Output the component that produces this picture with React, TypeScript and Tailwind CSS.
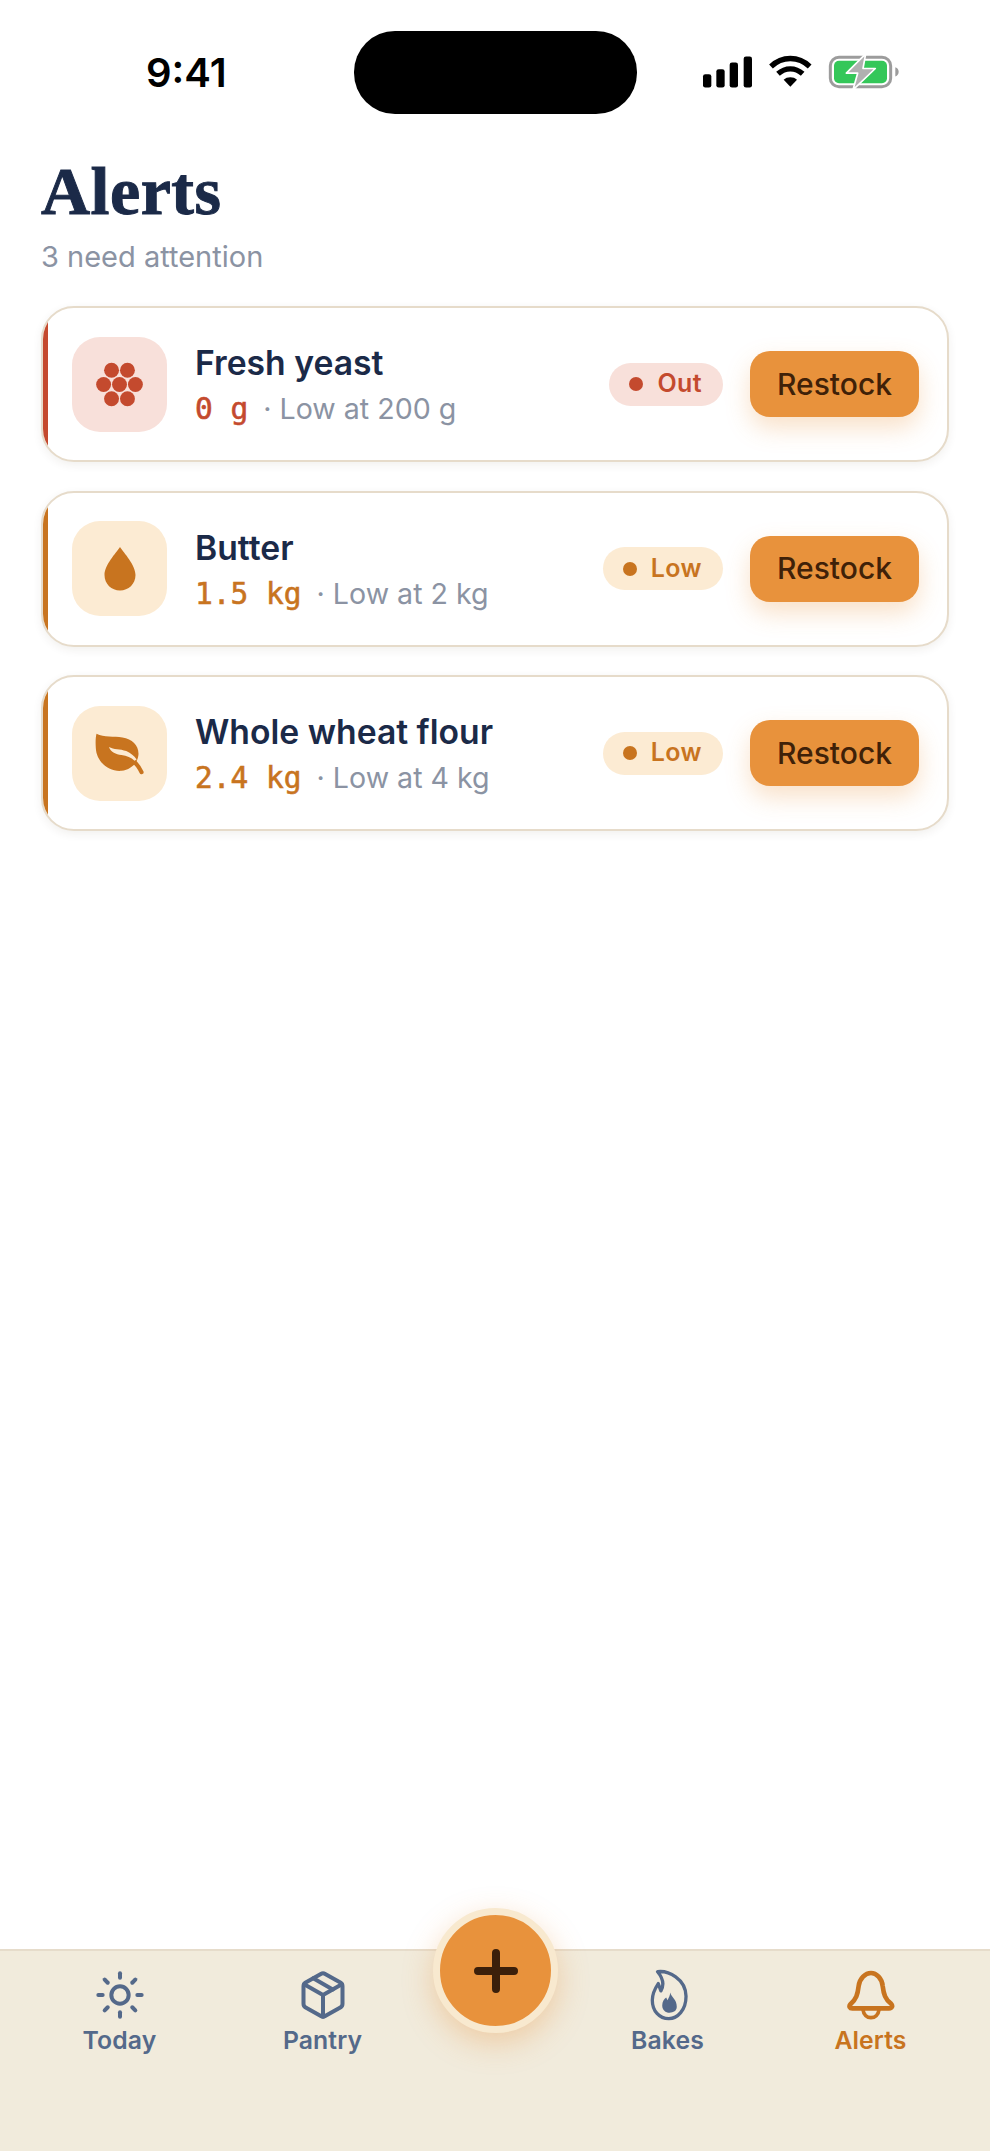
import React from "react";
import { Sun, Package } from "lucide-react";

const inter = "font-['Inter',sans-serif]";

function YeastIcon() {
  const pts = [[242,226],[290,226],[218,269],[266,269],[314,269],[242,312],[290,312]];
  return (
    <svg viewBox="180 190 172 158" className="w-[57px] h-[53px]">
      {pts.map(([x, y]) => <circle key={`${x}-${y}`} cx={x} cy={y} r="22.5" fill="#c44a2e" />)}
    </svg>
  );
}

function DropIcon() {
  return (
    <svg viewBox="0 0 36 48" className="w-[36px] h-[48px]">
      <path d="M18 2 C22 8 33.5 20 33.5 30 C33.5 39 26.5 45.5 18 45.5 C9.5 45.5 2.5 39 2.5 30 C2.5 20 14 8 18 2 Z" fill="#c8741f" />
    </svg>
  );
}

function LeafIcon() {
  return (
    <svg viewBox="40 36 150 130" className="w-[52px] h-[45px] -translate-x-[1px]">
      <path d="M50 44 C72 56 100 50 125 55 C155 60 174 80 171 106 C169 128 150 148 122 151 C85 154 50 125 48 85 C47 70 47 55 50 44 Z" fill="#c8741f" />
      <path d="M155 122 C166 130 174 142 180 155" fill="none" stroke="#c8741f" strokeWidth="12" strokeLinecap="round" />
      <path d="M86 82 C100 90 118 87 136 94 C150 100 158 108 166 118 L160 122 C150 112 138 107 122 105 C106 103 92 98 86 82 Z" fill="#fcebd3" />
    </svg>
  );
}

function FlameIcon() {
  return (
    <svg viewBox="54 26 124 160" className="w-[41px] h-[53px] translate-x-[2px]">
      <path d="M80 34 C112 30 165 55 166 108 C166 150 140 176 114 176 C85 176 64 152 64 120 C64 100 72 85 82 70 L90 92 C98 78 100 58 80 34 Z" fill="none" stroke="#54698a" strokeWidth="10" strokeLinejoin="round" />
      <path d="M118 97 C122 112 138 118 138 140 C138 152 128 158 116 158 C104 158 94 150 94 136 C94 124 100 116 106 112 L110 120 C114 112 118 106 118 97 Z" fill="#54698a" />
    </svg>
  );
}

function BellIcon() {
  return (
    <svg viewBox="50 24 144 156" className="w-[48px] h-[52px]">
      <path d="M122 36 C105 36 88 52 85 75 C82 100 78 115 60 130 C55 136 58 142 66 142 L176 142 C186 142 188 134 182 128 C165 115 160 100 157 75 C155 52 138 36 122 36 Z" fill="none" stroke="#c8741f" strokeWidth="14" strokeLinejoin="round" />
      <path d="M98 146 C100 162 110 170 122 170 C134 170 144 162 146 146" fill="none" stroke="#c8741f" strokeWidth="11" />
    </svg>
  );
}

function StatusIcons() {
  return (
    <svg viewBox="68 48 588 104" className="w-[196px] h-[35px] overflow-visible">
      <rect x="68" y="105" width="25" height="40" rx="7" fill="#000" />
      <rect x="108" y="90" width="25" height="55" rx="7" fill="#000" />
      <rect x="148" y="70" width="25" height="75" rx="7" fill="#000" />
      <rect x="190" y="52" width="25" height="93" rx="7" fill="#000" />
      <path d="M272 82 C305 50 355 50 388 82" fill="none" stroke="#000" strokeWidth="16" />
      <path d="M293 104 C315 84 345 84 367 104" fill="none" stroke="#000" strokeWidth="16" />
      <path d="M310 122 C320 112 340 112 350 122 L330 143 Z" fill="#000" />
      <rect x="450" y="54" width="181" height="89" rx="26" fill="none" stroke="#9c9c9c" strokeWidth="9" />
      <rect x="461" y="65" width="159" height="67" rx="15" fill="#34c759" />
      <path d="M645 84 C652 86 655 92 655 98 C655 104 652 110 645 112 Z" fill="#9c9c9c" />
      <path d="M556 44 L498 102 L532 102 L518 152 L585 88 L548 88 Z" fill="#b0b0b0" stroke="#fff" strokeWidth="5" strokeLinejoin="round" />
    </svg>
  );
}

type Row = {
  name: string;
  qty: string;
  low: string;
  status: string;
  icon: React.ReactNode;
};

function AlertCard({ name, qty, low, status, icon, out }: Row & { out: boolean }) {
  return (
    <div className="relative h-[156px] rounded-[33px] border-2 border-[#e6dbca] bg-white overflow-hidden shadow-[0_3px_10px_rgba(60,40,20,0.07)] flex items-center pl-[29px] pr-[28px]">
      <div className={out ? "absolute left-0 inset-y-0 w-[5px] bg-[#c44a2e]" : "absolute left-0 inset-y-0 w-[5px] bg-[#c8741f]"} />
      <div className={out ? "w-[95px] h-[95px] rounded-[28px] bg-[#f8e0da] flex items-center justify-center shrink-0" : "w-[95px] h-[95px] rounded-[28px] bg-[#fcebd3] flex items-center justify-center shrink-0"}>
        {icon}
      </div>
      <div className="ml-[28px] flex-1 min-w-0 pt-[2px]">
        <div className="text-[33.7px] leading-[42px] font-semibold text-[#1b2a48]">{name}</div>
        <div className="mt-[6px] text-[28.6px] leading-[38px] text-[#8b93a3] whitespace-pre flex items-baseline">
          <span className={out ? "font-['DejaVu_Sans_Mono',monospace] text-[29.5px] text-[#c44a2e] [-webkit-text-stroke:0.6px_#c44a2e]" : "font-['DejaVu_Sans_Mono',monospace] text-[29.5px] text-[#c8741f] [-webkit-text-stroke:0.6px_#c8741f]"}>{qty}</span>
          <span className="ml-[15px]">· {low}</span>
        </div>
      </div>
      <div className={out ? "h-[43px] rounded-full bg-[#f8e0da] flex items-center pl-[20px] pr-[21px] text-[25px] font-semibold tracking-[0.4px] text-[#c44a2e]" : "h-[43px] rounded-full bg-[#fcebd3] flex items-center pl-[20px] pr-[21px] text-[25px] font-semibold tracking-[0.4px] text-[#c8741f]"}>
        <span className={out ? "w-[14px] h-[14px] rounded-full bg-[#c44a2e] mr-[14px]" : "w-[14px] h-[14px] rounded-full bg-[#c8741f] mr-[14px]"} />
        {status}
      </div>
      <button className="ml-[27px] w-[169px] h-[66px] rounded-[20px] bg-[#e8923c] text-[#3f2108] text-[30px] font-medium shadow-[0_11px_24px_rgba(232,146,60,0.28)] shrink-0">
        Restock
      </button>
    </div>
  );
}

function Tab({ label, icon, active }: { label: string; icon: React.ReactNode; active?: boolean }) {
  return (
    <div className="flex-1 flex flex-col items-center">
      <div className="h-[52px] flex items-center justify-center">{icon}</div>
      <span className={active ? "mt-[4px] text-[24.75px] leading-[30px] font-semibold tracking-[0.1px] text-[#c8741f]" : "mt-[4px] text-[24.75px] leading-[30px] font-semibold tracking-[0.1px] text-[#54698a]"}>{label}</span>
    </div>
  );
}

export default function App() {
  return (
    <div className={`${inter} relative w-full h-[2151px] bg-white flex flex-col overflow-hidden`}>
      <div className="flex items-center pt-[31px] pl-[146px]">
        <div className="w-[208px] pt-[1px] text-[40px] leading-[48px] font-semibold text-black">9:41</div>
        <div className="w-[283px] h-[83px] rounded-[41px] bg-black" />
        <div className="ml-[66px]"><StatusIcons /></div>
      </div>

      <div className="px-[41px] mt-[42px]">
        <h1 className="font-['Liberation_Serif',serif] font-bold text-[68px] leading-[70px] tracking-[0.5px] text-[#1b2a48] [-webkit-text-stroke:1px_#1b2a48]">Alerts</h1>
        <p className="mt-[13px] text-[29px] leading-[36px] text-[#8b93a3]">3 need attention</p>
      </div>

      <main className="flex-1 px-[41px] mt-[31px] flex flex-col gap-[28.5px]">
        <AlertCard name="Fresh yeast" qty="0 g" low="Low at 200 g" status="Out" out icon={<YeastIcon />} />
        <AlertCard name="Butter" qty="1.5 kg" low="Low at 2 kg" status="Low" out={false} icon={<DropIcon />} />
        <AlertCard name="Whole wheat flour" qty="2.4 kg" low="Low at 4 kg" status="Low" out={false} icon={<LeafIcon />} />
      </main>

      <footer className="h-[202px] border-t-2 border-[#e6dccb] bg-[#f1ebdc] flex px-[18px] pt-[18px]">
        <Tab label="Today" icon={<Sun size={52} color="#54698a" strokeWidth={1.85} />} />
        <Tab label="Pantry" icon={<Package size={52} color="#54698a" strokeWidth={1.85} />} />
        <div className="w-[142px] shrink-0" />
        <Tab label="Bakes" icon={<FlameIcon />} />
        <Tab label="Alerts" icon={<BellIcon />} active />
      </footer>

      <button className="absolute left-[433px] top-[1908px] w-[125px] h-[125px] rounded-full bg-[#e8923c] border-[7px] border-[#f8e9cf] shadow-[0_10px_30px_rgba(232,146,60,0.35)] flex items-center justify-center">
        <svg viewBox="0 0 44 44" className="w-[44px] h-[44px]">
          <path d="M22 4 V40 M4 22 H40" stroke="#3b1f0a" strokeWidth="8" strokeLinecap="round" />
        </svg>
      </button>
    </div>
  );
}
